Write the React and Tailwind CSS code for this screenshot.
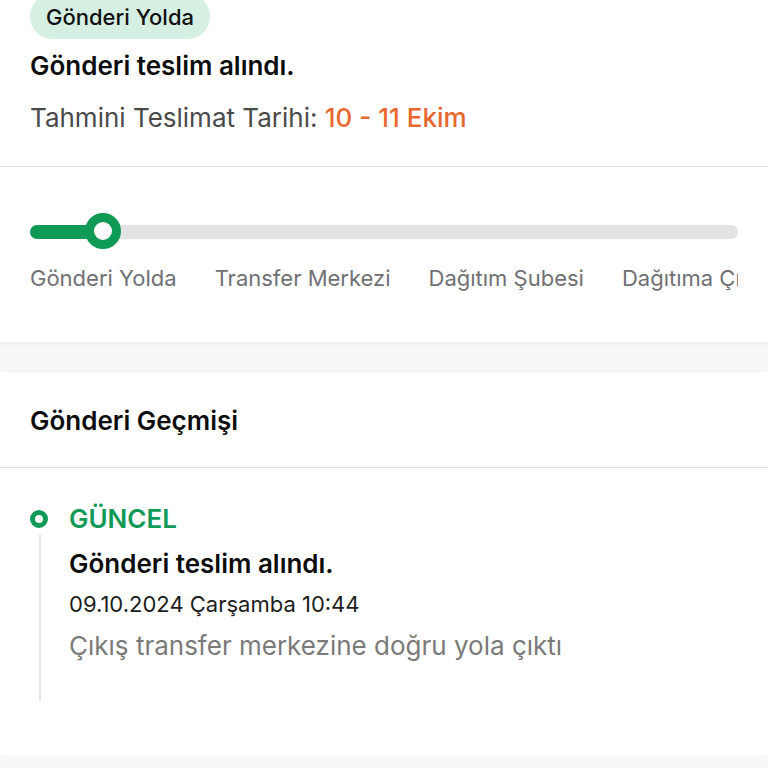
import React from 'react';

const steps = ['Gönderi Yolda', 'Transfer Merkezi', 'Dağıtım Şubesi', 'Dağıtıma Çıktı'];

export default function App() {
    return (
        <div className="min-h-[768px] bg-[#f6f7f8] font-['Inter','Noto_Sans',sans-serif] overflow-hidden">
            {/* summary card */}
            <div className="bg-white shadow-[0_2px_4px_rgba(0,0,0,0.04)]">
                <div className="px-[30px] pb-[33px]">
                    <div className="mt-[-6px] inline-flex h-[45px] items-center rounded-full bg-[#d5efe2] px-[16px] pt-[1px] text-[22px] font-medium text-[#111]">
                        Gönderi Yolda
                    </div>
                    <div className="mt-[12px] text-[26px] font-semibold leading-[30px] text-[#0d0d0d]">
                        Gönderi teslim alındı.
                    </div>
                    <div className="mt-[22px] text-[26px] leading-[30px] text-[#4a4a4a]">
                        Tahmini Teslimat Tarihi: <span className="font-medium text-[#e8692f]">10 - 11 Ekim</span>
                    </div>
                </div>
                <div className="h-px bg-[#e3e3e3]" />
                <div className="px-[30px] pt-[46px] pb-[50px]">
                    <div className="relative h-[38px]">
                        <div className="absolute left-0 right-0 top-[12px] h-[14px] rounded-full bg-[#e2e3e5]" />
                        <div className="absolute left-0 top-[12px] h-[14px] w-[80px] rounded-full bg-[#0f9a55]" />
                        <div className="absolute left-[55px] top-0 h-[36px] w-[36px] rounded-full border-[9px] border-[#0f9a55] bg-white" />
                    </div>
                    {/* scrollable step labels, last one runs off the edge */}
                    <div className="mt-[13px] flex gap-[38px] overflow-x-auto whitespace-nowrap text-[22px] leading-[28px] text-[#707075] [scrollbar-width:none]">
                        {steps.map((s) => (
                            <span key={s} className="shrink-0">{s}</span>
                        ))}
                    </div>
                </div>
            </div>

            {/* history card */}
            <div className="mt-[30px] bg-white shadow-[0_-1px_3px_rgba(0,0,0,0.03)]">
                <div className="flex h-[95px] items-center px-[30px] pt-[2px] text-[26px] font-semibold text-[#0d0d0d]">
                    Gönderi Geçmişi
                </div>
                <div className="h-px bg-[#e3e3e3]" />
                <div className="relative px-[30px] pt-[38px] pb-[54px]">
                    <div className="absolute left-[39px] top-[66px] bottom-[54px] w-[2px] bg-[#e4e4e4]" />
                    <div className="flex items-center gap-[21px]">
                        <div className="h-[18px] w-[18px] shrink-0 rounded-full border-[5px] border-[#109a55] bg-white" />
                        <span className="text-[26px] font-semibold leading-[26px] text-[#119a57]">GÜNCEL</span>
                    </div>
                    <div className="pl-[39px]">
                        <div className="mt-[17px] text-[26px] font-semibold leading-[30px] text-[#0d0d0d]">
                            Gönderi teslim alındı.
                        </div>
                        <div className="mt-[11px] text-[22px] leading-[28px] text-[#1d1d1d]">
                            09.10.2024 Çarşamba 10:44
                        </div>
                        <div className="mt-[13px] text-[26px] leading-[30px] text-[#7a7a7a]">
                            Çıkış transfer merkezine doğru yola çıktı
                        </div>
                        <div className="h-[40px]" />
                    </div>
                </div>
            </div>
        </div>
    );
}
